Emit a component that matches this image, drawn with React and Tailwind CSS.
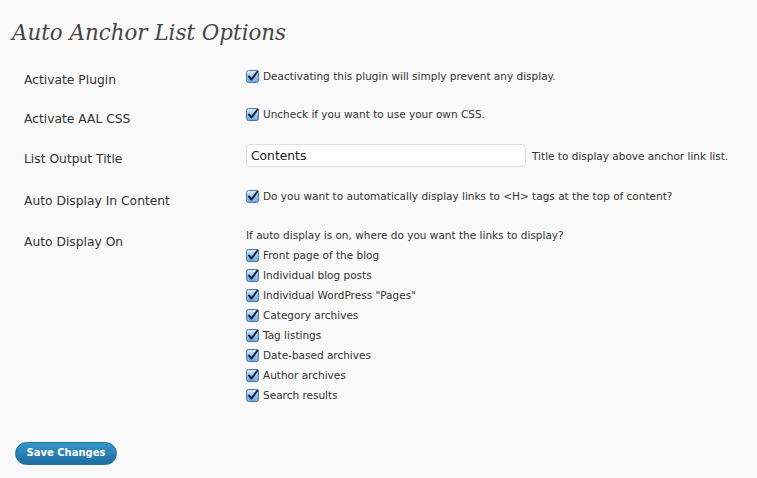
import React from 'react'

function Check() {
  return (
    <svg width="13" height="13" viewBox="0 0 13 13" className="shrink-0">
      <defs>
        <linearGradient id="cbg" x1="0" y1="0" x2="0" y2="1">
          <stop offset="0" stopColor="#dcecfb" />
          <stop offset="0.5" stopColor="#9cc6ee" />
          <stop offset="1" stopColor="#6aa7e2" />
        </linearGradient>
      </defs>
      <rect x="0.5" y="0.5" width="12" height="12" rx="2" fill="url(#cbg)" stroke="#4f77a3" />
      <path d="M3 6.5 L5.5 9.5 L11.5 1.5" fill="none" stroke="#15263a" strokeWidth="2" strokeLinecap="round" strokeLinejoin="round" />
    </svg>
  )
}

function CheckLine({ children }) {
  return (
    <div className="flex items-center gap-[4px] h-[20px]">
      <Check />
      <span>{children}</span>
    </div>
  )
}

const displayOn = [
  'Front page of the blog',
  'Individual blog posts',
  'Individual WordPress "Pages"',
  'Category archives',
  'Tag listings',
  'Date-based archives',
  'Author archives',
  'Search results',
]

function Row({ label, height, labelPad = 9, children }) {
  return (
    <div className="flex items-start" style={{ height }}>
      <div className="w-[234px] pl-[12px] leading-[20px] text-[12.3px] text-[#333]" style={{ paddingTop: labelPad }}>{label}</div>
      <div className="pt-[6px] text-[10.5px] leading-[16px] text-[#333]">{children}</div>
    </div>
  )
}

export default function App() {
  return (
    <div className="w-[757px] h-[478px] bg-[#f9f9f9] pl-[12px] pt-[17px] overflow-hidden" style={{ fontFamily: '"DejaVu Sans", sans-serif' }}>
      <h2 className="text-[21.4px] leading-[32px] italic text-[#464646] h-[44px]" style={{ fontFamily: '"DejaVu Serif", serif' }}>
        Auto Anchor List Options
      </h2>

      <Row label="Activate Plugin" height={39}>
        <div className="flex items-center gap-[4px] pt-[1px]">
          <Check />
          <span>Deactivating this plugin will simply prevent any display.</span>
        </div>
      </Row>

      <Row label="Activate AAL CSS" height={40}>
        <div className="flex items-center gap-[4px]">
          <Check />
          <span>Uncheck if you want to use your own CSS.</span>
        </div>
      </Row>

      <Row label="List Output Title" height={41}>
        <div className="flex items-center gap-[6px] -mt-[2px]">
          <div className="w-[280px] h-[23px] bg-white border border-[#dfdfdf] rounded-[4px] flex items-center pl-[4px] text-[12.3px] text-[#222]">
            Contents
          </div>
          <span>Title to display above anchor link list.</span>
        </div>
      </Row>

      <Row label="Auto Display In Content" height={40} labelPad={10}>
        <div className="flex items-center gap-[4px] pt-[1px]">
          <Check />
          <span>Do you want to automatically display links to &lt;H&gt; tags at the top of content?</span>
        </div>
      </Row>

      <Row label="Auto Display On" height={190} labelPad={11}>
        <div className="-mt-[2px]">
          <div className="h-[20px] flex items-center">If auto display is on, where do you want the links to display?</div>
          {displayOn.map(t => (
            <CheckLine key={t}>{t}</CheckLine>
          ))}
        </div>
      </Row>

      <div className="pt-[28px] pl-[3px]">
        <button className="h-[23px] w-[102px] rounded-full border border-[#21759b] bg-gradient-to-b from-[#3596cc] to-[#1f6d9e] text-white text-[10px] font-bold leading-none">
          Save Changes
        </button>
      </div>
    </div>
  )
}
